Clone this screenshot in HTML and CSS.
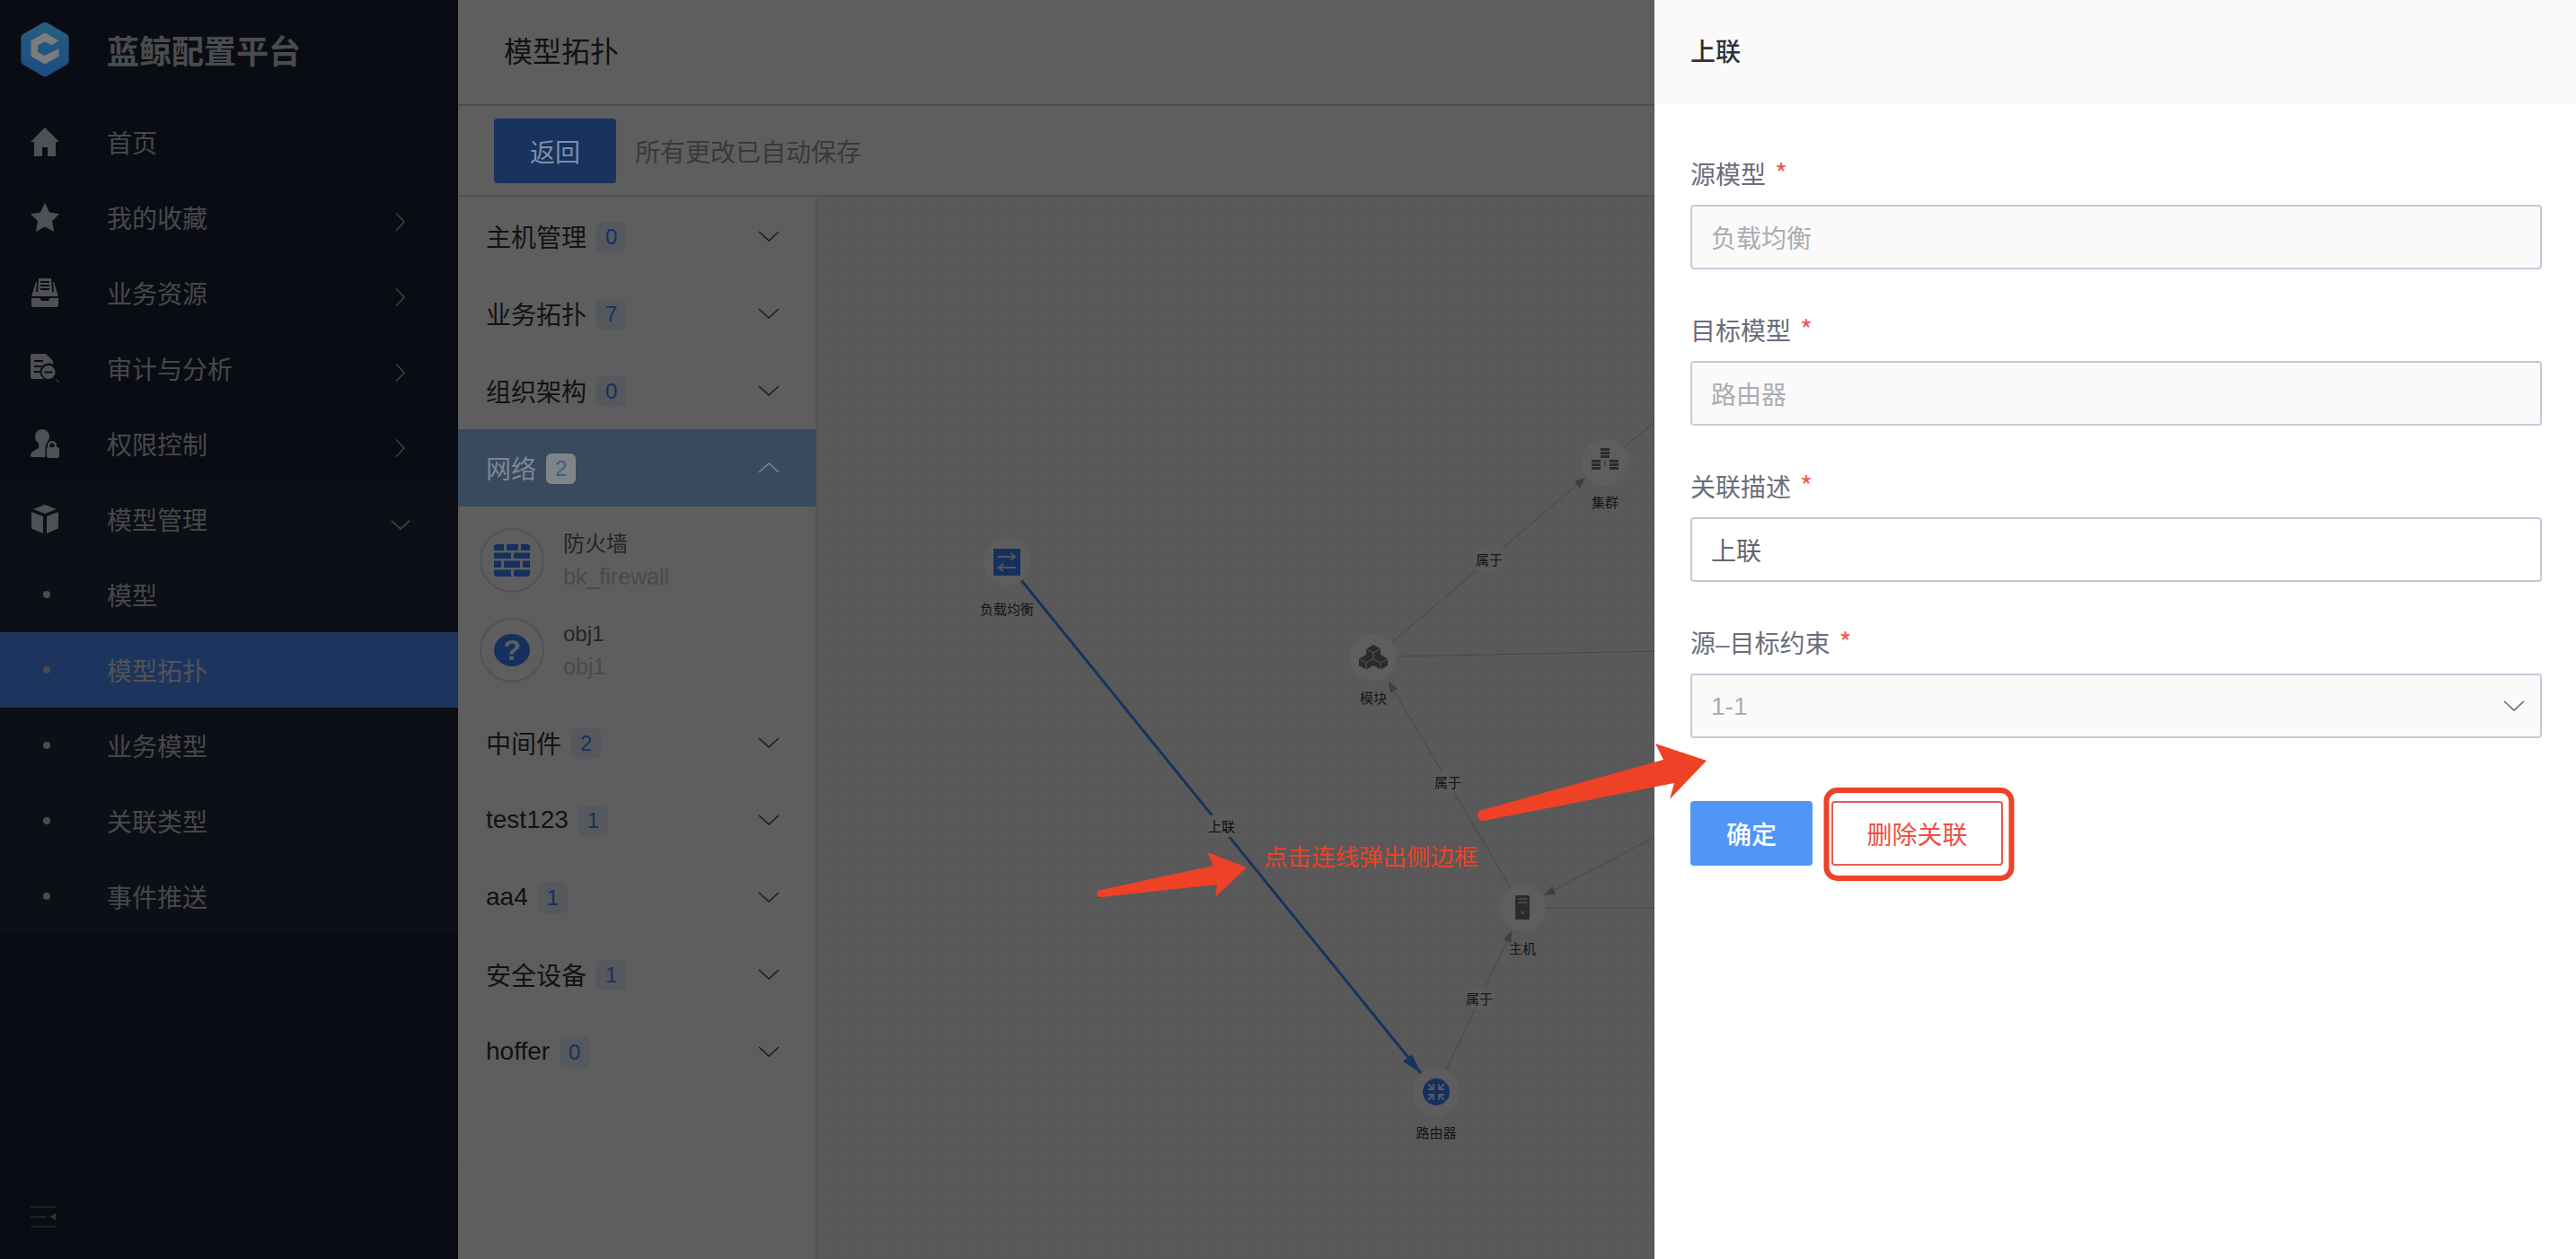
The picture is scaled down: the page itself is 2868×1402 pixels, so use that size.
FILE: index.html
```html
<!DOCTYPE html>
<html lang="zh-CN">
<head>
    <meta charset="UTF-8">
    <title>模型拓扑</title>
    <link rel="stylesheet" href="styles.css">
</head>
<body>
<svg class="defs" width="0" height="0">
    <symbol id="chev-right" viewBox="0 0 12 24"><path d="M1 1.5 11 12 1 22.5" fill="none" stroke="currentColor" stroke-width="1.4"/></symbol>
    <symbol id="chev-down" viewBox="0 0 24 12"><path d="M1 1 12 11 23 1" fill="none" stroke="currentColor" stroke-width="1.6"/></symbol>
    <symbol id="chev-up" viewBox="0 0 24 12"><path d="M1 11 12 1 23 11" fill="none" stroke="currentColor" stroke-width="1.6"/></symbol>
</svg>
<div class="app">
    <aside class="sidebar">
        <div class="brand">
            <svg class="logo lit" viewBox="0 0 56 64">
                <defs>
                    <linearGradient id="logoFill" x1="0" y1="0" x2="0" y2="1">
                        <stop offset="0" stop-color="#25607f"/>
                        <stop offset="1" stop-color="#1b4a84"/>
                    </linearGradient>
                </defs>
                <path d="M25.5 1.4a5 5 0 0 1 5 0l22.500 13a5 5 0 0 1 2.500 4.300v26.600a5 5 0 0 1-2.500 4.300l-22.500 13a5 5 0 0 1-5 0l-22.500-13a5 5 0 0 1-2.500-4.300V18.700a5 5 0 0 1 2.500-4.300z" fill="url(#logoFill)"/>
                <path d="M28 13 44 22 35.500 27 28 23 20 27 20 35 28 39 44 31 44 40 28 49 12 40 12 22z" fill="#7c7c7c"/>
            </svg>
            <span class="brand-name">蓝鲸配置平台</span>
        </div>
        <nav class="nav">
            <a class="nav-item">
                <svg class="nav-icon" viewBox="0 0 32 32"><path d="M16 0 32 16H28V32H19V22H13V32H4V16H0z"/></svg>
                <span>首页</span>
            </a>
            <a class="nav-item">
                <svg class="nav-icon" viewBox="0 0 32 32"><path d="M16 0 21 10.500 32 12.200 24 20.300 26 32 16 26.400 6 32 8 20.300 0 12.200 11 10.500z"/></svg>
                <span>我的收藏</span>
                <svg class="nav-arrow"><use href="#chev-right"/></svg>
            </a>
            <a class="nav-item">
                <svg class="nav-icon" viewBox="0 0 32 32"><path d="M9 0H23L24 16H8zM11 3V5H21V3zM11 7V9H21V7zM11 11V13H21V11z" fill-rule="evenodd"/><path d="M6 4H7L6 15H26L25 4H26L31 20H1zM1 22H10.500L12 25H20L21.500 22H31V30a2 2 0 0 1-2 2H3a2 2 0 0 1-2-2z"/></svg>
                <span>业务资源</span>
                <svg class="nav-arrow"><use href="#chev-right"/></svg>
            </a>
            <a class="nav-item">
                <svg class="nav-icon" viewBox="0 0 32 32"><path d="M2 0H17L25 8V12a9 9 0 0 0-10 16H2a2 2 0 0 1-2-2V2a2 2 0 0 1 2-2zM4 7V9H14V7zM4 13V15H13V13zM4 19V21H11V19z" fill-rule="evenodd"/><path d="M20 13a7.500 7.500 0 1 1 0 15 7.500 7.500 0 0 1 0-15zM15.500 19.500V21.500H24.500V19.500z" fill-rule="evenodd"/><path d="M28 28 32 32" stroke="currentColor" fill="none"/></svg>
                <span>审计与分析</span>
                <svg class="nav-arrow"><use href="#chev-right"/></svg>
            </a>
            <a class="nav-item">
                <svg class="nav-icon" viewBox="0 0 32 32"><path d="M13 0a8 8 0 0 1 8 8c0 3.500-2 6-3.500 7.500V18h-1v13H2a2 2 0 0 1-2-2c0-4 6-6 9-8v-5.500C6.500 14 5 11.500 5 8a8 8 0 0 1 8-8z"/><path d="M19 20v-2a5 5 0 0 1 10 0v2h1a2 2 0 0 1 2 2v8a2 2 0 0 1-2 2H20a2 2 0 0 1-2-2V22a2 2 0 0 1 1-2zM21.500 20h5v-2a2.500 2.500 0 0 0-5 0z" fill-rule="evenodd"/></svg>
                <span>权限控制</span>
                <svg class="nav-arrow"><use href="#chev-right"/></svg>
            </a>
            <div class="nav-group">
                <a class="nav-item">
                    <svg class="nav-icon" viewBox="0 0 32 32"><path d="M16 0 29 5 16 10 3 5zM1 8 14 13V32L2 27a1.500 1.500 0 0 1-1-1.500zM31 8V25.500a1.500 1.500 0 0 1-1 1.500L18 32V13z"/></svg>
                    <span>模型管理</span>
                    <svg class="nav-arrow-down"><use href="#chev-down"/></svg>
                </a>
                <a class="nav-sub"><i class="dot"></i><span>模型</span></a>
                <a class="nav-sub active"><i class="dot"></i><span>模型拓扑</span></a>
                <a class="nav-sub"><i class="dot"></i><span>业务模型</span></a>
                <a class="nav-sub"><i class="dot"></i><span>关联类型</span></a>
                <a class="nav-sub"><i class="dot"></i><span>事件推送</span></a>
            </div>
        </nav>
        <div class="sidebar-foot">
            <svg class="fold-icon" viewBox="0 0 28 24"><path d="M0 1H28M0 12H18M0 23H28" fill="none" stroke="currentColor" stroke-width="1.2"/><path d="M22 12 28 8V16z" fill="currentColor"/></svg>
        </div>
    </aside>

    <main class="main">
        <header class="page-title">模型拓扑</header>
        <div class="toolbar">
            <button class="btn-back"><span class="lit">返回</span></button>
            <span class="save-tip">所有更改已自动保存</span>
        </div>
        <div class="workspace">
            <div class="model-list">
                <div class="group"><span>主机管理</span><em class="badge">0</em><svg class="group-arrow"><use href="#chev-down"/></svg></div>
                <div class="group"><span>业务拓扑</span><em class="badge">7</em><svg class="group-arrow"><use href="#chev-down"/></svg></div>
                <div class="group"><span>组织架构</span><em class="badge">0</em><svg class="group-arrow"><use href="#chev-down"/></svg></div>
                <div class="group open"><span class="lit">网络</span><em class="badge lit">2</em><svg class="group-arrow lit"><use href="#chev-up"/></svg></div>
                <div class="group-items">
                    <div class="model">
                        <span class="model-icon">
                            <svg viewBox="0 0 40 36"><path fill="#3a84ff" d="M3 0H11V7H0V3a3 3 0 0 1 3-3zM14 0H27V7H14zM30 0H37a3 3 0 0 1 3 3V7H30zM0 9.500H19V16H0zM22 9.500H40V16H22zM0 18.500H8V26H0zM11 18.500H29V26H11zM32 18.500H40V26H32zM0 28.500H19V36H3a3 3 0 0 1-3-3zM22 28.500H40V33a3 3 0 0 1-3 3H22z"/></svg>
                        </span>
                        <div class="model-text"><strong>防火墙</strong><small>bk_firewall</small></div>
                    </div>
                    <div class="model">
                        <span class="model-icon">
                            <svg viewBox="0 0 40 36"><ellipse cx="20" cy="18" rx="20" ry="18" fill="#3a84ff"/><text class="help-mark" x="20" y="29" text-anchor="middle">?</text></svg>
                        </span>
                        <div class="model-text"><strong>obj1</strong><small>obj1</small></div>
                    </div>
                </div>
                <div class="group"><span>中间件</span><em class="badge">2</em><svg class="group-arrow"><use href="#chev-down"/></svg></div>
                <div class="group"><span>test123</span><em class="badge">1</em><svg class="group-arrow"><use href="#chev-down"/></svg></div>
                <div class="group"><span>aa4</span><em class="badge">1</em><svg class="group-arrow"><use href="#chev-down"/></svg></div>
                <div class="group"><span>安全设备</span><em class="badge">1</em><svg class="group-arrow"><use href="#chev-down"/></svg></div>
                <div class="group"><span>hoffer</span><em class="badge">0</em><svg class="group-arrow"><use href="#chev-down"/></svg></div>
            </div>
            <div class="canvas">
                <!-- viewBox uses page coordinates, the canvas starts at 910,219 -->
                <svg class="graph" viewBox="910 219 1958 1183">
                    <g class="edge">
                        <path d="M1550 715 1765 532M1809 497 1900 424"/>
                        <path d="M1556 731 2000 722"/>
                        <path d="M1682 989 1546 759"/>
                        <path d="M1610 1192 1683 1037"/>
                        <path d="M1900 902 1719 997"/>
                        <path d="M1721 1011H2000"/>
                    </g>
                    <g class="edge-head">
                        <path d="M1765 532 1759 544 1753 536z"/>
                        <path d="M1546 759 1556 766.500 1548 771.500z"/>
                        <path d="M1683 1037 1682.500 1050 1673.500 1046z"/>
                        <path d="M1719 997 1732 996 1728 987z"/>
                    </g>
                    <path class="edge-active" d="M1137 646 1582 1195"/>
                    <path class="edge-active-head" d="M1582 1195 1562 1182 1572 1174z"/>

                    <g class="edge-label">
                        <rect x="1643" y="611" width="30" height="24"/><text x="1658" y="629">属于</text>
                        <rect x="1597" y="859" width="30" height="24"/><text x="1612" y="877">属于</text>
                        <rect x="1632" y="1100" width="30" height="24"/><text x="1647" y="1118">属于</text>
                        <rect x="1345" y="908" width="30" height="24"/><text class="strong" x="1360" y="926">上联</text>
                    </g>

                    <g class="node">
                        <circle cx="1121" cy="626" r="26"/>
                        <rect x="1106" y="611" width="30" height="30" fill="#3a84ff"/>
                        <path d="M1111 620H1129M1125 616 1130 620 1125 624M1131 632H1113M1117 628 1112 632 1117 636" fill="none" stroke="#dfe6f0" stroke-width="2"/>
                        <text x="1121" y="684">负载均衡</text>
                    </g>
                    <g class="node">
                        <circle cx="1529" cy="732" r="26"/>
                        <g class="cubes">
                            <path d="M1529 718 1537 722.500V730L1529 734.500 1521 730V722.500z"/>
                            <path d="M1521 729 1529 733.500V741L1521 745.500 1513 741V733.500z"/>
                            <path d="M1537 729 1545 733.500V741L1537 745.500 1529 741V733.500z"/>
                            <path class="cube-edge" d="M1521 722.500 1529 727 1537 722.500M1529 727V734M1513 733.500 1521 738 1529 733.500M1521 738V745M1529 733.500 1537 738 1545 733.500M1537 738V745"/>
                        </g>
                        <text x="1529" y="783">模块</text>
                    </g>
                    <g class="node">
                        <circle cx="1787" cy="515" r="26"/>
                        <g class="rack">
                            <rect x="1782" y="499" width="10" height="3"/><rect x="1782" y="503" width="10" height="3"/><rect x="1782" y="507" width="10" height="3"/>
                            <rect x="1772" y="512" width="10" height="3"/><rect x="1772" y="516" width="10" height="3"/><rect x="1772" y="520" width="10" height="3"/>
                            <rect x="1792" y="512" width="10" height="3"/><rect x="1792" y="516" width="10" height="3"/><rect x="1792" y="520" width="10" height="3"/>
                            <rect x="1786.500" y="513" width="1" height="7"/>
                        </g>
                        <text x="1787" y="565">集群</text>
                    </g>
                    <g class="node">
                        <circle cx="1695" cy="1011" r="26"/>
                        <rect class="server" x="1687" y="997" width="16" height="27" rx="1.500"/>
                        <path d="M1690 1001H1700M1690 1005H1700" stroke="#d8dbe0" stroke-width="1.500"/>
                        <circle cx="1695" cy="1016" r="1.500" fill="#d8dbe0"/>
                        <text x="1695" y="1062">主机</text>
                    </g>
                    <g class="node">
                        <circle cx="1599" cy="1216" r="26"/>
                        <circle cx="1599" cy="1216" r="15" fill="#3a84ff"/>
                        <path d="M1590 1207 1596 1213M1596 1207V1213H1590M1608 1207 1602 1213M1602 1207V1213H1608M1590 1225 1596 1219M1596 1225V1219H1590M1608 1225 1602 1219M1602 1225V1219H1608" fill="none" stroke="#eef2f8" stroke-width="1.800"/>
                        <text x="1599" y="1267">路由器</text>
                    </g>
                </svg>
            </div>
        </div>
    </main>

    <div class="mask"></div>

    <section class="side-panel">
        <div class="panel-head">上联</div>
        <form class="panel-form">
            <div class="field">
                <label>源模型<i>*</i></label>
                <input type="text" value="负载均衡" disabled>
            </div>
            <div class="field">
                <label>目标模型<i>*</i></label>
                <input type="text" value="路由器" disabled>
            </div>
            <div class="field">
                <label>关联描述<i>*</i></label>
                <input type="text" value="上联">
            </div>
            <div class="field">
                <label>源–目标约束<i>*</i></label>
                <div class="select-wrap">
                    <select disabled><option>1-1</option></select>
                    <svg class="select-arrow"><use href="#chev-down"/></svg>
                </div>
            </div>
            <div class="actions">
                <button type="button" class="btn-ok">确定</button>
                <button type="button" class="btn-delete">删除关联</button>
            </div>
        </form>
    </section>

    <!-- screenshot markup drawn on top of everything -->
    <svg class="markup" viewBox="0 0 2868 1402">
        <path d="M1225 991 1351 964 1344 949 1388 966 1353 999 1355 985 1226 999a4 4 0 0 1-1-8z"/>
        <path d="M1650 902 1852 846 1843 828 1900 847 1859 890 1864 872 1652 914a6 6 0 0 1-2-12z"/>
        <rect x="2033.500" y="880" width="206" height="98" rx="12"/>
        <text x="1407" y="964">点击连线弹出侧边框</text>
    </svg>
</div>
</body>
</html>
```

FILE: styles.css
```css
* {
    box-sizing: border-box;
}

html, body {
    margin: 0;
    height: 100%;
}

body {
    font-family: "Liberation Sans", "Noto Sans CJK SC", sans-serif;
    font-size: 28px;
    color: #63656e;
    background-color: #fff;
    overflow: hidden;
}

.defs {
    position: absolute;
}

.app {
    position: relative;
    display: flex;
    height: 100vh;
    overflow: hidden;
}

/* things that stay brighter than the dim layer allows */
.lit {
    position: relative;
    z-index: 2;
}

/* sidebar */
.sidebar {
    display: flex;
    flex-direction: column;
    flex: 0 0 510px;
    background-color: #1b2336;
    color: #c0c2c8;
}

.brand {
    display: flex;
    align-items: center;
    height: 116px;
    padding: 0 0 6px 22px;
    border-bottom: 1px solid #232c3f;
}

.logo {
    width: 56px;
    height: 62px;
}

.brand-name {
    margin-left: 41px;
    font-size: 36px;
    font-weight: 700;
    color: #c8cbd1;
}

.nav-item,
.nav-sub {
    display: flex;
    align-items: center;
    height: 84px;
    padding-left: 34px;
}

.nav-icon {
    flex: none;
    width: 32px;
    height: 32px;
    margin-right: 53px;
    fill: #d6d9de;
    color: #d6d9de;
}

.nav-arrow {
    width: 11px;
    height: 22px;
    margin: 10px 59px 0 auto;
}

.nav-arrow-down {
    width: 22px;
    height: 11px;
    margin: 12px 53px 0 auto;
}

.nav-group {
    background-color: #212a3a;
}

.nav-sub {
    padding-left: 48px;
}

.nav-sub.active {
    background-color: #4f8dff;
    color: #dde2e9;
}

.dot {
    flex: none;
    width: 8px;
    height: 8px;
    margin-right: 63px;
    border-radius: 50%;
    background-color: #c8cbd1;
}

.sidebar-foot {
    display: flex;
    align-items: center;
    height: 103px;
    margin-top: auto;
    padding: 8px 0 0 34px;
    border-top: 1px solid #232c3f;
}

.fold-icon {
    width: 28px;
    height: 24px;
    color: #8a8e98;
}

/* main area */
.main {
    display: flex;
    flex-direction: column;
    flex: 1;
    min-width: 0;
}

.page-title {
    flex: none;
    height: 118px;
    padding: 38px 0 0 51px;
    line-height: 40px;
    font-size: 32px;
    color: #313238;
    border-bottom: 2px solid #c8cdd8;
}

.toolbar {
    display: flex;
    align-items: center;
    flex: none;
    height: 101px;
    padding-left: 40px;
    border-bottom: 2px solid #dcdee5;
}

.btn-back {
    width: 136px;
    height: 72px;
    border: none;
    border-radius: 4px;
    background-color: #3f8aff;
    color: #7e90aa;
    font: inherit;
}

.save-tip {
    margin-left: 21px;
    color: #979ba5;
}

.workspace {
    display: flex;
    flex: 1;
    min-height: 0;
}

.model-list {
    flex: none;
    width: 400px;
    padding-top: 1px;
    border-right: 2px solid #dcdee5;
}

.group {
    display: flex;
    align-items: center;
    height: 86px;
    padding: 0 40px 0 31px;
    color: #313238;
}

.group.open {
    background-color: #9cc6ff;
    color: #7d8794;
}

.badge {
    height: 34px;
    margin: 2px 0 0 11px;
    padding: 0 10px;
    border-radius: 6px;
    background-color: #e7effc;
    color: #3a84ff;
    font-style: normal;
    font-size: 24px;
    line-height: 34px;
}

.group.open .badge {
    background-color: #7f8488;
    color: #3e5a8f;
}

.group-arrow {
    width: 24px;
    height: 12px;
    margin-left: auto;
    color: #4a4c55;
}

.group.open .group-arrow {
    color: #7d8794;
}

.group-items {
    padding: 10px 0 10px;
}

.model {
    display: flex;
    align-items: center;
    height: 100px;
    padding-left: 24px;
}

.model-icon {
    display: flex;
    align-items: center;
    justify-content: center;
    flex: none;
    width: 72px;
    height: 72px;
    margin-right: 21px;
    border: 2px solid #dcdee5;
    border-radius: 50%;
}

.model-icon svg {
    width: 40px;
    height: 36px;
}

.help-mark {
    font-size: 32px;
    font-weight: 700;
    fill: #fff;
}

.model-text strong {
    display: block;
    font-weight: 400;
    font-size: 24px;
    line-height: 36px;
    color: #63656e;
}

.model-text small {
    display: block;
    font-size: 25px;
    line-height: 36px;
    color: #c4c6cc;
}

.canvas {
    position: relative;
    flex: 1;
    background-color: #f2f2f2;
    background-image:
        linear-gradient(to right, #ebebed 1px, transparent 1px),
        linear-gradient(to bottom, #ebebed 1px, transparent 1px);
    background-size: 20px 20px;
}

.graph {
    position: absolute;
    top: 0;
    left: 0;
    width: 100%;
    height: 100%;
}

.edge path {
    fill: none;
    stroke: #b8bcc8;
    stroke-width: 1;
}

.edge-head path {
    fill: #a3a8b8;
}

.edge-active {
    fill: none;
    stroke: #3f8aff;
    stroke-width: 3;
}

.edge-active-head {
    fill: #3f8aff;
}

.edge-label text,
.node text {
    font-size: 15px;
    text-anchor: middle;
    fill: #3a3a3a;
}

.edge-label rect {
    fill: #f6f6f6;
}

.edge-label .strong {
    fill: #222;
}

.node circle:first-child {
    fill: #fff;
}

.cubes path {
    fill: #70747e;
}

.cubes .cube-edge {
    fill: none;
    stroke: #e4e6ea;
    stroke-width: 1;
}

.rack rect,
.server {
    fill: #70747e;
}

/* dim layer and side panel */
.mask {
    position: absolute;
    top: 0;
    right: 0;
    bottom: 0;
    left: 0;
    z-index: 1;
    background-color: rgba(0, 0, 0, 0.63);
}

.side-panel {
    position: absolute;
    top: 0;
    right: 0;
    bottom: 0;
    z-index: 3;
    width: 1026px;
    background-color: #fff;
}

.panel-head {
    height: 116px;
    padding: 39px 0 0 40px;
    line-height: 40px;
    background-color: #fafafa;
    color: #313238;
    font-weight: 500;
}

.panel-form {
    padding: 56px 38px 0 40px;
}

.field {
    margin-bottom: 46px;
}

.field label {
    display: block;
    height: 40px;
    margin-bottom: 16px;
    line-height: 40px;
    color: #6a6e7a;
}

.field label i {
    margin-left: 10px;
    font-family: "Noto Sans CJK SC", sans-serif;
    font-style: normal;
    font-size: 30px;
    color: #f05a50;
}

.field input,
.field select {
    display: block;
    width: 100%;
    height: 72px;
    padding: 0 21px;
    border: 2px solid #c3cbd9;
    border-radius: 4px;
    background-color: #fff;
    color: #63656e;
    font: inherit;
    appearance: none;
    opacity: 1;
}

.field input:disabled,
.field select:disabled {
    background-color: #fafafa;
    color: #aaacb2;
    -webkit-text-fill-color: #aaacb2;
}

.select-wrap {
    position: relative;
}

.select-arrow {
    position: absolute;
    top: 30px;
    right: 19px;
    width: 24px;
    height: 12px;
    color: #63656e;
}

.actions {
    display: flex;
    gap: 21px;
    margin-top: 70px;
}

.btn-ok,
.btn-delete {
    height: 72px;
    border-radius: 4px;
    font: inherit;
}

.btn-ok {
    width: 136px;
    border: none;
    background-color: #5196f7;
    color: #fff;
    font-weight: 500;
}

.btn-delete {
    width: 191px;
    border: 2px solid #ea5a50;
    background-color: #fff;
    color: #ec4f45;
}

/* annotations on the screenshot */
.markup {
    position: absolute;
    top: 0;
    left: 0;
    z-index: 4;
    width: 100%;
    height: 100%;
    pointer-events: none;
}

.markup path {
    fill: #ee4125;
}

.markup rect {
    fill: none;
    stroke: #ee4125;
    stroke-width: 6;
}

.markup text {
    font-size: 26.5px;
    fill: #ee4125;
}
```
